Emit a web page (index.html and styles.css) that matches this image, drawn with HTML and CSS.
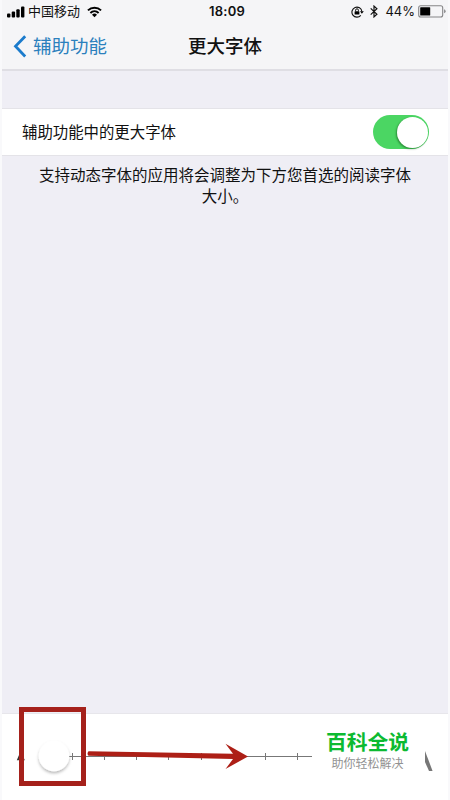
FILE: index.html
```
<!DOCTYPE html>
<html lang="zh-CN">
<head>
<meta charset="utf-8">
<title>更大字体</title>
<link rel="stylesheet" href="styles.css">
</head>
<body>
<div class="screen">
  <header class="header">
    <div class="status">
      <div class="status-left">
        <svg class="signal" width="18" height="12" viewBox="0 0 18 12"><rect x="0" y="7.5" width="3.4" height="4" rx="1"/><rect x="4.7" y="5.5" width="3.4" height="6" rx="1"/><rect x="9.3" y="3.2" width="3.4" height="8.3" rx="1"/><rect x="14" y="0.5" width="3.4" height="11" rx="1"/></svg>
        <span class="carrier">中国移动</span>
        <svg class="wifi" width="15" height="12" viewBox="0 0 16 12"><path d="M1 4.3a10.2 10.2 0 0 1 14 0M3.6 7a6.5 6.5 0 0 1 8.8 0" fill="none" stroke="#000" stroke-width="2.1"/><path d="M5.3 8.9a4 4 0 0 1 5.4 0L8 11.6z"/></svg>
      </div>
      <span class="time">18:09</span>
      <div class="status-right">
        <svg class="lock" width="13" height="12" viewBox="0 0 13 12"><path d="M9.8 9.3A5 5 0 1 1 10.9 5.5" fill="none" stroke="#111" stroke-width="1.1"/><path d="M9 5.3h3.8l-1.900 2.500z"/><rect x="3.600" y="5.200" width="4.800" height="3.300" rx=".5"/><path d="M4.600 5.300V4.200a1.400 1.400 0 0 1 2.800 0v1.100" fill="none" stroke="#111"/></svg>
        <svg class="bluetooth" width="8" height="13" viewBox="0 0 8 13"><path d="M.7 3.4l6.200 5.800L4 11.900V1.100l2.900 2.700L.7 9.600" fill="none" stroke="#111" stroke-width="1.200"/></svg>
        <span class="percent">44%</span>
        <svg class="battery" width="28" height="13" viewBox="0 0 28 13"><rect x=".7" y=".7" width="24" height="11.300" rx="2" fill="none" stroke="#858587" stroke-width="1.100"/><rect x="2.200" y="2.200" width="10" height="8.300" rx=".6"/><path d="M26.100 4.300q1.500.3 1.500 2t-1.500 2z" fill="#858587"/></svg>
      </div>
    </div>
    <nav class="nav">
      <a class="back"><svg width="14" height="23" viewBox="0 0 14 23"><path d="M12.200 1.200L2.500 11.300l9.700 10.200" fill="none" stroke="#1b7bcc" stroke-width="2.800"/></svg><span>辅助功能</span></a>
      <h1 class="title">更大字体</h1>
    </nav>
  </header>
  <main class="content">
    <div class="row">
      <span class="label">辅助功能中的更大字体</span>
      <span class="switch"><span class="knob"></span></span>
    </div>
    <p class="note">支持动态字体的应用将会调整为下方您首选的阅读字体大小。</p>
  </main>
  <footer class="sizer">
    <svg class="track" width="450" height="86" viewBox="0 0 450 86">
      <defs><filter id="shadow" x="-40%" y="-40%" width="180%" height="190%"><feDropShadow dx="0" dy="2" stdDeviation="1.7" flood-color="#000" flood-opacity=".28"/></filter></defs>
      <path d="M16.800 46.200l4-9.500 4 9.500h-2l-1-2.500h-2l-1 2.500z" fill="#333"/>
      <path d="M54 42.500H312" stroke="#777" stroke-width="1"/>
      <path d="M72.500 39v7M104.500 39v7M136.500 39v7M168.500 39v7M201.500 39v7M233.500 39v7M265.500 39v7M297.500 39v7" stroke="#777"/>
      <path d="M425 37l7.600 20H429L425 48z" fill="#777"/>
      <circle cx="54" cy="42" r="15.300" fill="#fff" filter="url(#shadow)"/>
      <rect x="21.500" y="-4.500" width="62" height="74" fill="none" stroke="#a5211b" stroke-width="5"/>
      <path d="M88.500 37.200L233 39.700l-7.500-10L248 42.500 225.500 55l7.500-10-144.500-3.200q-2-2.300 0-4.600z" fill="#ad1f16"/>
    </svg>
    <div class="brand">
      <strong>百科全说</strong>
      <span>助你轻松解决</span>
    </div>
  </footer>
</div>
</body>
</html>
```
FILE: styles.css
```
* { box-sizing: border-box; }
body { margin: 0; }
.screen {
  width: 450px;
  height: 800px;
  display: flex;
  flex-direction: column;
  overflow: hidden;
  background: #efeef5;
  border-left: 2px solid #f9f9fb;
  border-right: 2px solid #f9f9fb;
  font-family: Inter, "Noto Sans CJK SC", sans-serif;
  color: #111;
}
.header { height: 71px; background: #f5f5f7; border-bottom: 2px solid #dfdee4; }
.status {
  height: 23px;
  display: grid;
  grid-template-columns: 1fr auto 1fr;
  align-items: center;
  padding: 0 1px 0 5px;
  line-height: 23px;
}
.status svg { display: block; flex: none; }
.status-left, .status-right { display: flex; align-items: center; }
.status-right { justify-content: flex-end; }
.carrier { font-size: 13px; margin: 0 7px 0 3px; }
.time { font-size: 13px; font-weight: 600; letter-spacing: .2px; }
.bluetooth { margin: 0 7px 0 6px; }
.percent { font-size: 13px; margin-right: 3px; }
.battery { margin-right: 1px; }
.nav { height: 46px; display: grid; grid-template-columns: 1fr auto 1fr; align-items: center; padding: 0 11px; }
.back { display: flex; align-items: center; gap: 6px; color: #2b80bd; font-size: 18.500px; line-height: 28px; }
.title { margin: 0; font-size: 18.500px; line-height: 28px; font-weight: 500; }
.content { flex: 1; padding-top: 37px; }
.row {
  height: 48px;
  display: flex;
  align-items: center;
  justify-content: space-between;
  padding: 0 19px 0 20px;
  background: #fff;
  border-top: 1px solid #e4e3e8;
  border-bottom: 1px solid #e4e3e8;
  font-size: 15.400px;
}
.label { padding-bottom: 2px; }
.switch { width: 56px; height: 34px; padding: 1.500px; border-radius: 17px; background: #4bd663; display: flex; justify-content: flex-end; }
.knob { width: 31px; height: 31px; border-radius: 50%; background: #fff; box-shadow: -1px 1px 2px rgba(0, 50, 0, .45); }
.note { margin: 9px 35px 0; font-size: 15.500px; line-height: 21px; text-align: center; }
.sizer { position: relative; height: 86px; margin: 0 -2px; background: #fff; box-shadow: 0 -1px #e7e6eb; }
.track { display: block; overflow: visible; }
.brand {
  position: absolute;
  left: 312px;
  top: 15px;
  width: 111px;
  height: 60px;
  display: flex;
  flex-direction: column;
  align-items: center;
  background: #fff;
}
.brand strong { font-size: 20.800px; line-height: 28px; font-weight: 700; color: #0cba31; }
.brand span { font-size: 12px; line-height: 14px; color: #929292; }
```
